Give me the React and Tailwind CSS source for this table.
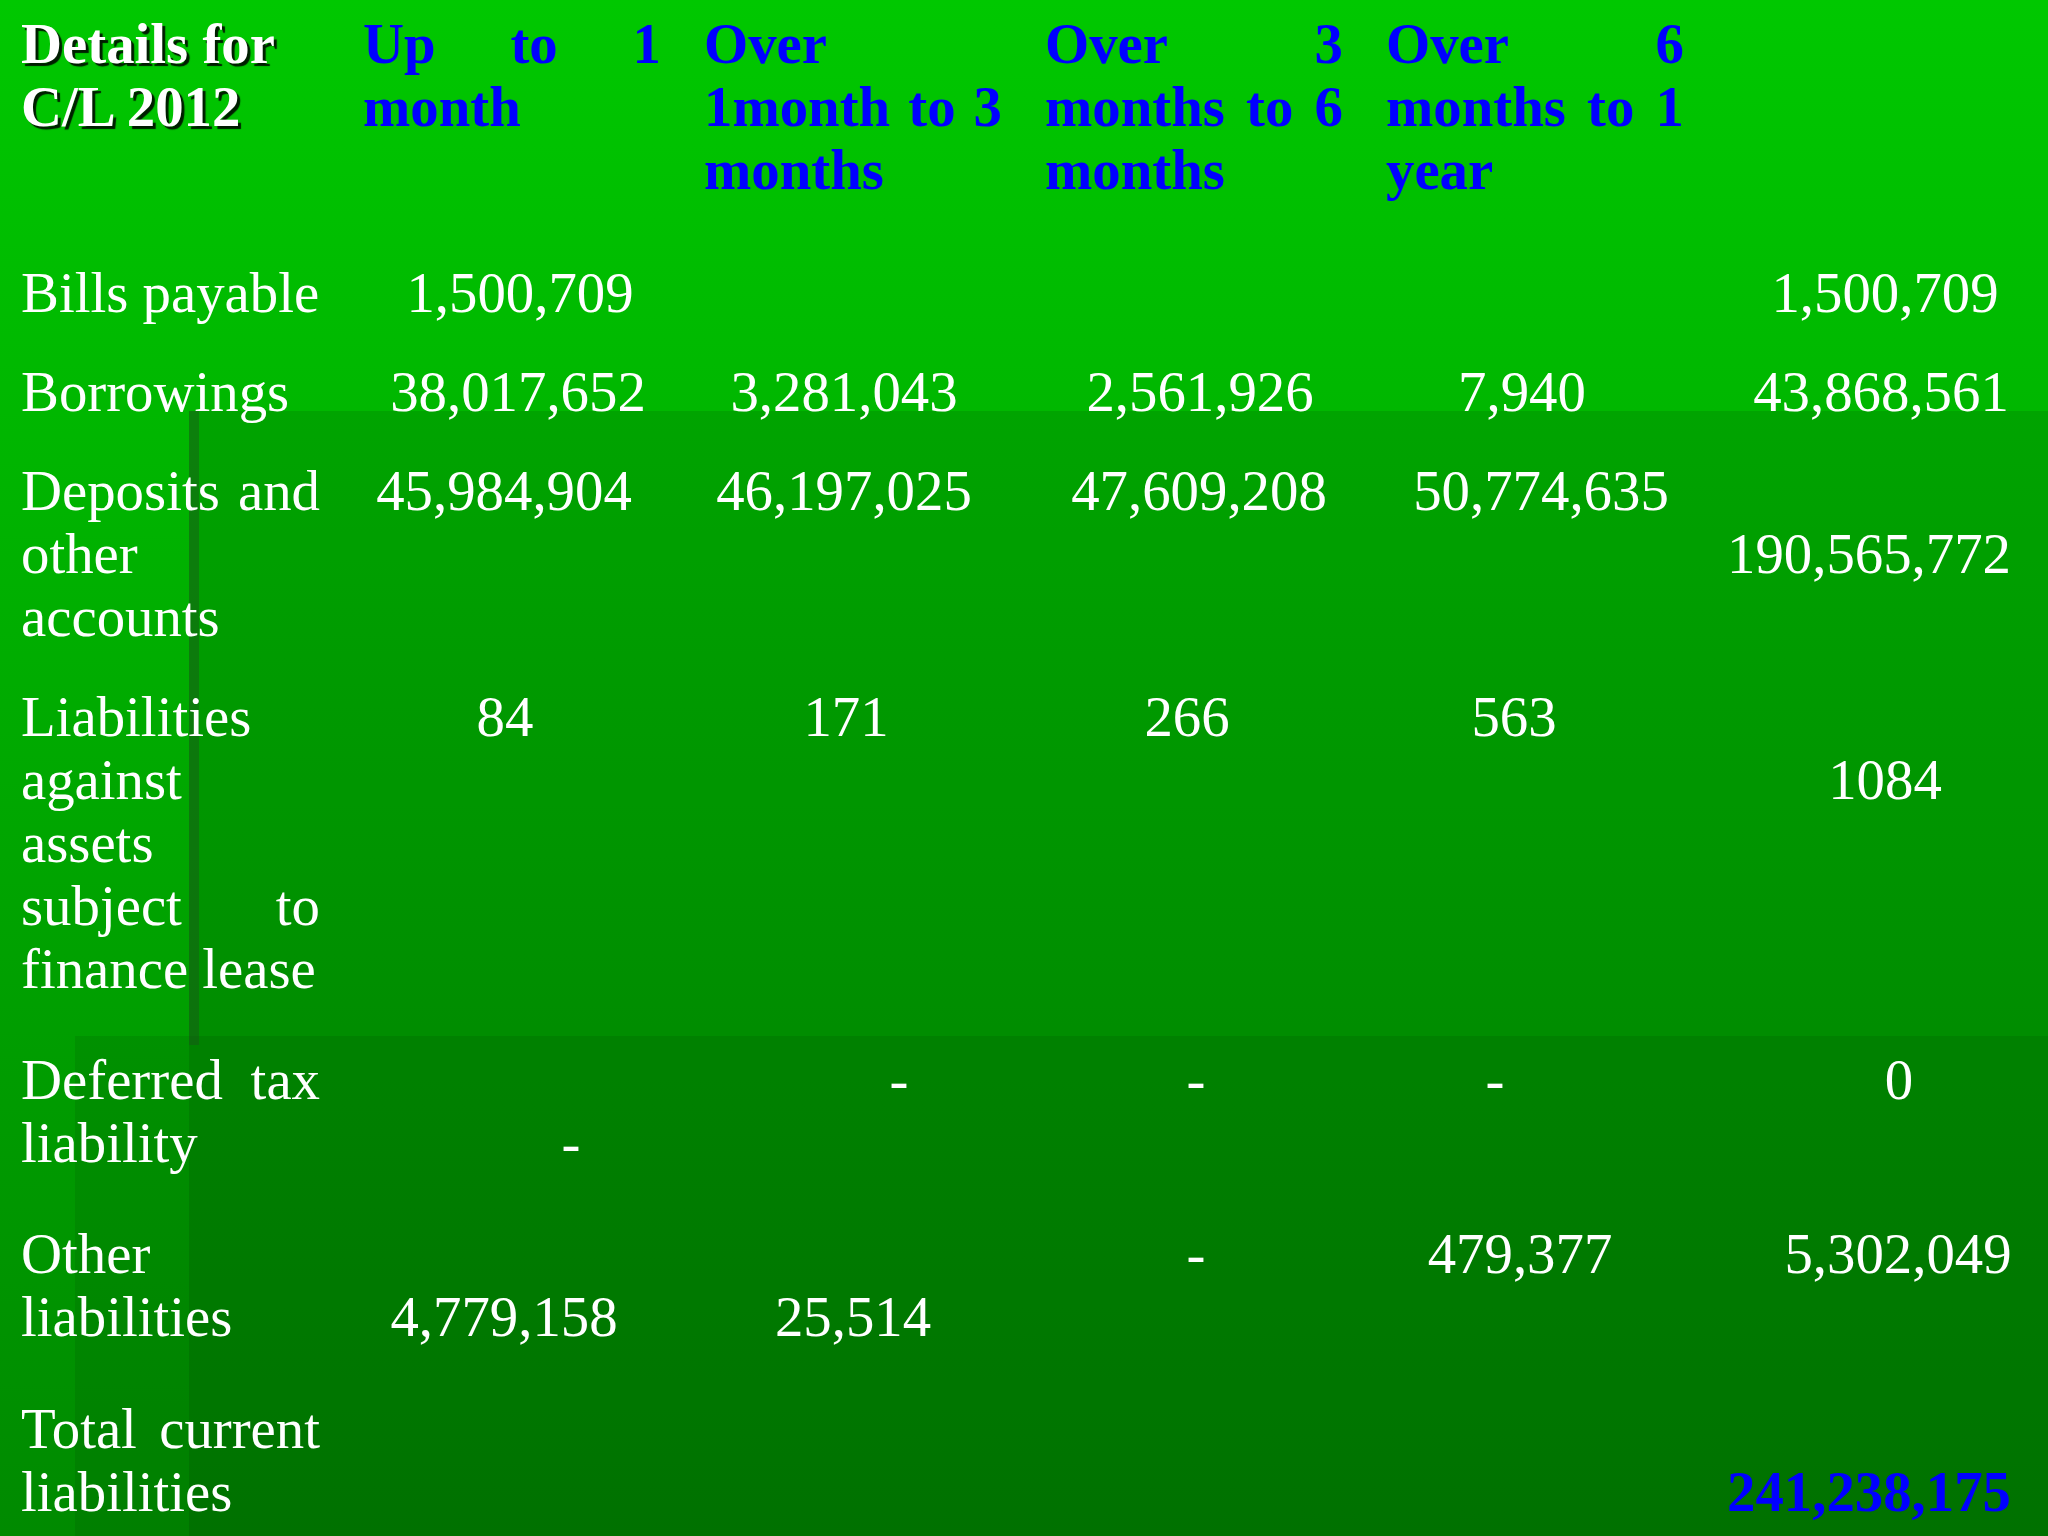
import React from "react";

// each label line: [text, justify]
const header = {
  label: [["Details for", false], ["C/L 2012", false]],
  cols: [
    [["Up to 1", true], ["month", false]],
    [["Over", false], ["1month to 3", true], ["months", false]],
    [["Over 3", true], ["months to 6", true], ["months", false]],
    [["Over 6", true], ["months to 1", true], ["year", false]],
  ],
};

const rows = [
  {
    mt: "mt-[60px]",
    label: [["Bills payable", false]],
    cells: [
      { v: "1,500,709", cls: "pl-[16px]" },
      null,
      null,
      null,
      { v: "1,500,709", cls: "pl-[16px]" },
    ],
  },
  {
    mt: "mt-[36px]",
    label: [["Borrowings", false]],
    cells: [
      { v: "38,017,652", cls: "pl-[12px]" },
      { v: "3,281,043", cls: "pr-[18px]" },
      { v: "2,561,926", cls: "pl-[12px]" },
      { v: "7,940", cls: "pr-[26px]" },
      { v: "43,868,561", cls: "pl-[8px]" },
    ],
  },
  {
    mt: "mt-[36px]",
    label: [["Deposits and", true], ["other", false], ["accounts", false]],
    cells: [
      { v: "45,984,904", cls: "pr-[16px]" },
      { v: "46,197,025", cls: "pr-[18px]" },
      { v: "47,609,208", cls: "pl-[10px]" },
      { v: "50,774,635", cls: "pl-[12px]" },
      { v: "190,565,772", line: 1, cls: "pr-[16px]" },
    ],
  },
  {
    mt: "mt-[37px]",
    label: [
      ["Liabilities", false],
      ["against", false],
      ["assets", false],
      ["subject to", true],
      ["finance lease", false],
    ],
    cells: [
      { v: "84", cls: "pr-[14px]" },
      { v: "171", cls: "pr-[14px]" },
      { v: "266", cls: "pr-[14px]" },
      { v: "563", cls: "pr-[42px]" },
      { v: "1084", line: 1, cls: "pl-[16px]" },
    ],
  },
  {
    mt: "mt-[48px]",
    label: [["Deferred tax", true], ["liability", false]],
    cells: [
      { v: "-", line: 1, cls: "pl-[118px]" },
      { v: "-", cls: "pl-[92px]" },
      { v: "-", cls: "pl-[4px]" },
      { v: "-", cls: "pr-[80px]" },
      { v: "0", cls: "pl-[44px]" },
    ],
  },
  {
    mt: "mt-[48px]",
    label: [["Other", false], ["liabilities", false]],
    cells: [
      { v: "4,779,158", line: 1, cls: "pr-[16px]" },
      { v: "25,514", line: 1, cls: "" },
      { v: "-", cls: "pl-[4px]" },
      { v: "479,377", cls: "pr-[30px]" },
      { v: "5,302,049", cls: "pl-[42px]" },
    ],
  },
  {
    mt: "mt-[49px]",
    label: [["Total current", true], ["liabilities", false]],
    cells: [
      null,
      null,
      null,
      null,
      { v: "241,238,175", line: 1, cls: "pr-[16px]", total: true },
    ],
  },
];

function Lines({ lines, className = "" }) {
  return (
    <div className={className}>
      {lines.map(([t, j], i) => (
        <div
          key={i}
          className={
            j
              ? "whitespace-nowrap text-justify [text-align-last:justify]"
              : "whitespace-nowrap"
          }
        >
          {t}
        </div>
      ))}
    </div>
  );
}

function App() {
  const grid =
    "grid grid-cols-[299px_298px_298px_298px_298px_1fr] gap-x-[43px]";

  return (
    <div className="relative w-[2048px] h-[1536px] overflow-hidden bg-linear-to-b from-[#00c800] to-[#008a00] font-['Liberation_Serif','Times_New_Roman',serif] text-[56.8px] leading-[63px] text-white">
      {/* template panels */}
      <div className="absolute left-[189px] top-[411px] right-0 bottom-0 bg-black/10"></div>
      <div className="absolute left-[75px] top-[1036px] right-0 bottom-0 bg-black/[0.08]"></div>
      <div className="absolute left-[189px] top-[411px] w-[10px] h-[634px] bg-[#1e4a1e]/40"></div>

      <div className="relative px-[21px] pt-[12px]">
        <div className={grid}>
          <Lines
            lines={header.label}
            className="font-bold [text-shadow:3px_3px_1px_rgba(0,0,0,0.85)]"
          />
          {header.cols.map((c, i) => (
            <Lines key={i} lines={c} className="font-bold text-[#0000ff]" />
          ))}
          <div></div>
        </div>

        {rows.map((r, i) => (
          <div key={i} className={`${grid} ${r.mt}`}>
            <Lines lines={r.label} />
            {r.cells.map((c, k) =>
              c ? (
                <div
                  key={k}
                  className={`text-center whitespace-nowrap ${
                    c.line ? "pt-[63px]" : ""
                  } ${c.cls} ${c.total ? "font-bold text-[#0000ff]" : ""}`}
                >
                  {c.v}
                </div>
              ) : (
                <div key={k}></div>
              )
            )}
          </div>
        ))}
      </div>
    </div>
  );
}

export default App;
